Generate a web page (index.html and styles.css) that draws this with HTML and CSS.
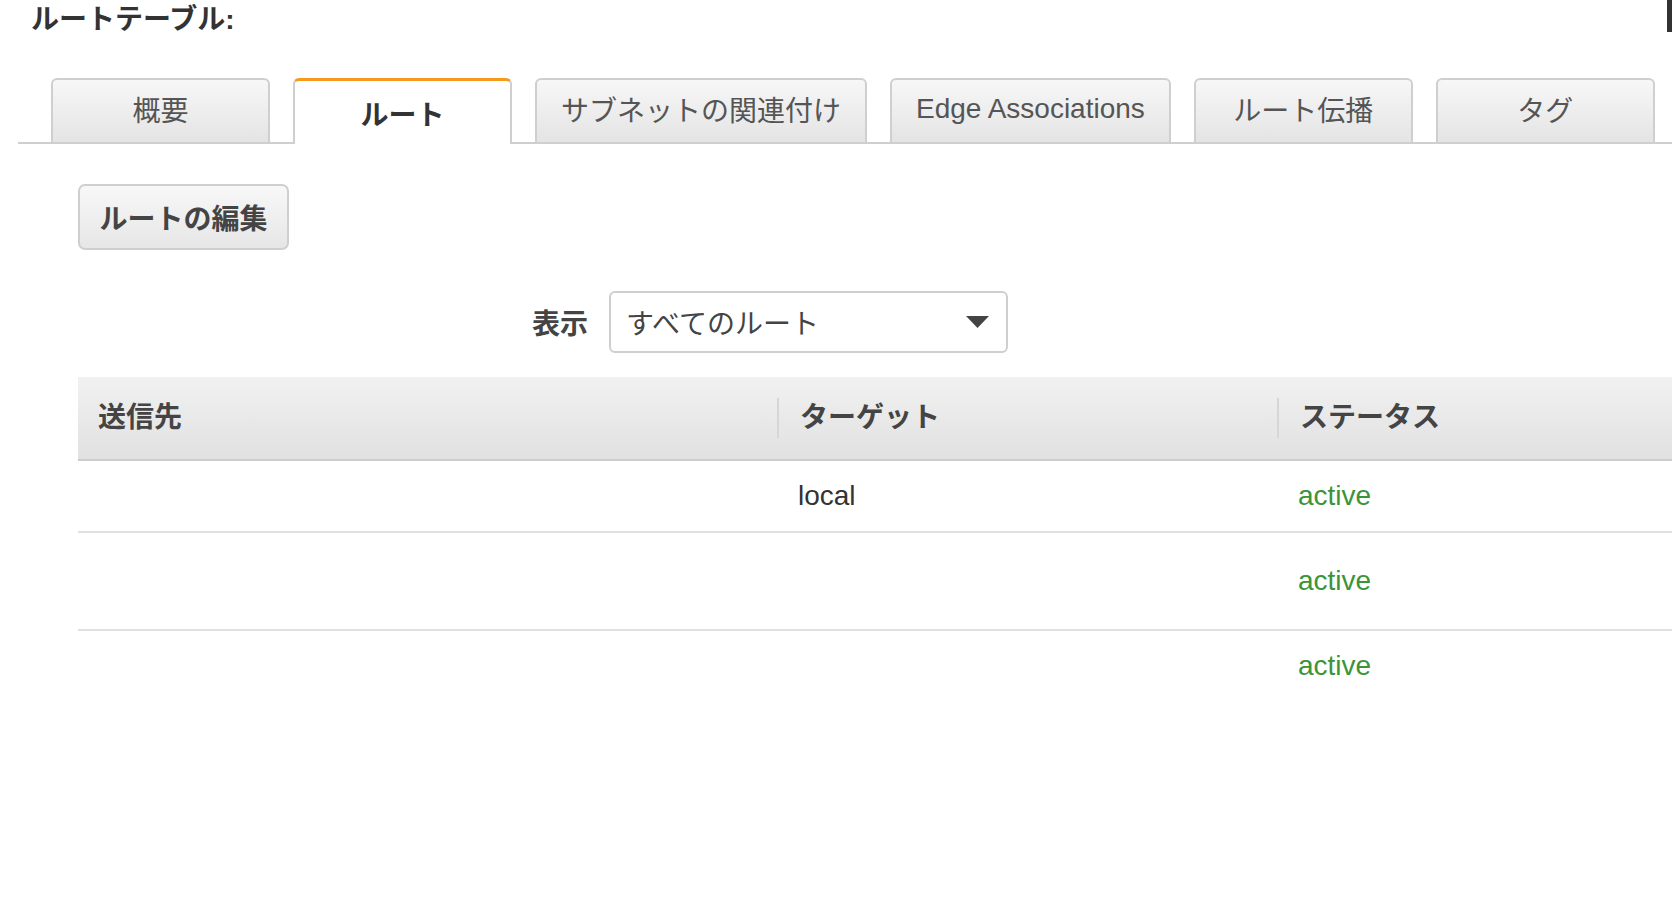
FILE: index.html
```html
<!DOCTYPE html>
<html lang="ja">
<head>
<meta charset="utf-8">
<title>ルートテーブル</title>
<link rel="stylesheet" href="styles.css">
</head>
<body>
<div class="page">
  <h1 class="title">ルートテーブル:</h1>
  <div class="edge-mark"></div>

  <div class="tabbar">
    <div class="tab">概要</div>
    <div class="tab active">ルート</div>
    <div class="tab">サブネットの関連付け</div>
    <div class="tab">Edge Associations</div>
    <div class="tab">ルート伝播</div>
    <div class="tab">タグ</div>
  </div>

  <div class="content">
    <button class="btn">ルートの編集</button>

    <div class="filter">
      <span class="filter-label">表示</span>
      <div class="select">
        <span class="select-text">すべてのルート</span>
        <svg class="caret" width="23" height="12" viewBox="0 0 23 12"><path d="M0 0 H23 L11.5 12 Z" fill="#444"/></svg>
      </div>
    </div>

    <div class="table">
      <div class="thead">
        <div class="th">送信先</div>
        <div class="th sep">ターゲット</div>
        <div class="th sep">ステータス</div>
      </div>
      <div class="tr r1">
        <div class="td"></div>
        <div class="td">local</div>
        <div class="td status">active</div>
      </div>
      <div class="tr r2">
        <div class="td"></div>
        <div class="td"></div>
        <div class="td status">active</div>
      </div>
      <div class="tr r3">
        <div class="td"></div>
        <div class="td"></div>
        <div class="td status">active</div>
      </div>
    </div>
  </div>
</div>
</body>
</html>
```

FILE: styles.css
```css
html, body {
  margin: 0;
  padding: 0;
  background: #fff;
}

body {
  font-family: "Liberation Sans", "Noto Sans CJK JP", sans-serif;
  color: #444;
  width: 1672px;
  height: 918px;
  overflow: hidden;
}

.page {
  position: relative;
}

.title {
  margin: 0;
  padding-left: 31px;
  font-size: 28px;
  font-weight: bold;
  line-height: 40px;
  height: 38px;
  color: #333;
}

.edge-mark {
  position: absolute;
  top: 0;
  right: 0;
  width: 5px;
  height: 32px;
  background: #333;
}

.tabbar {
  display: flex;
  align-items: flex-end;
  gap: 23px;
  margin-top: 40px;
  margin-left: 18px;
  padding-left: 33px;
  height: 64px;
  border-bottom: 2px solid #cfcfcf;
}

.tab {
  box-sizing: border-box;
  height: 66px;
  margin-bottom: -2px;
  min-width: 219px;
  padding: 0 24px 4px;
  display: flex;
  align-items: center;
  justify-content: center;
  font-size: 28px;
  color: #555;
  border: 2px solid #cfcfcf;
  border-radius: 6px 6px 0 0;
  background: linear-gradient(#f7f7f7, #e4e4e4);
  white-space: nowrap;
}

.tab.active {
  background: #fff;
  border-top: 3px solid #f7991c;
  border-bottom: none;
  font-weight: bold;
  color: #333;
  padding: 0 24px;
}

.content {
  margin-left: 78px;
}

.btn {
  display: block;
  margin-top: 40px;
  box-sizing: border-box;
  width: 211px;
  height: 66px;
  padding: 0;
  font-family: inherit;
  font-size: 28px;
  font-weight: bold;
  color: #444;
  border: 2px solid #cfcfcf;
  border-radius: 7px;
  background: linear-gradient(#f8f8f8, #e6e6e6);
}

.filter {
  display: flex;
  align-items: center;
  gap: 21px;
  margin-top: 41px;
  margin-left: 454px;
  height: 62px;
}

.filter-label {
  font-size: 28px;
  font-weight: bold;
  color: #444;
}

.select {
  box-sizing: border-box;
  width: 399px;
  height: 62px;
  border: 2px solid #cfcfcf;
  border-radius: 6px;
  display: flex;
  align-items: center;
  justify-content: space-between;
  padding: 0 17px 0 15px;
}

.select-text {
  font-size: 28px;
  color: #444;
}

.caret {
  display: block;
}

.table {
  margin-top: 24px;
}

.thead {
  display: grid;
  grid-template-columns: 699px 500px 1fr;
  box-sizing: border-box;
  height: 84px;
  background: linear-gradient(#f1f1f1, #e1e1e1);
  border-bottom: 2px solid #cccccc;
  align-items: center;
}

.th {
  font-size: 28px;
  font-weight: bold;
  color: #444;
  padding-left: 20px;
  height: 40px;
  line-height: 40px;
}

.th.sep {
  padding-left: 21px;
  border-left: 2px solid #d6d6d6;
}

.tr {
  display: grid;
  grid-template-columns: 699px 500px 1fr;
  align-items: center;
  box-sizing: border-box;
  border-bottom: 2px solid #e0e0e0;
}

.tr.r1 { height: 72px; }
.tr.r2 { height: 98px; }
.tr.r3 { height: 70px; border-bottom: none; }

.td {
  font-size: 28px;
  color: #333;
  padding-left: 21px;
}

.td:first-child {
  padding-left: 20px;
}

.td.status {
  color: #3b9538;
}
```
